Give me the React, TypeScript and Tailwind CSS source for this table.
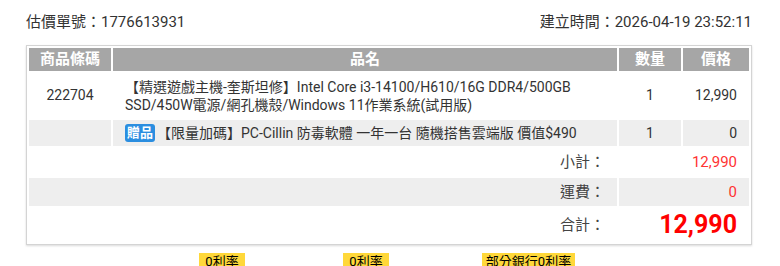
import React from "react";

// 估價單明細
const items = [
  {
    code: "222704",
    name: "【精選遊戲主機-奎斯坦修】Intel Core i3-14100/H610/16G DDR4/500GB SSD/450W電源/網孔機殼/Windows 11作業系統(試用版)",
    qty: 1,
    price: "12,990",
    gift: false,
  },
  {
    code: "",
    name: "【限量加碼】PC-Cillin 防毒軟體 一年一台 隨機搭售雲端版 價值$490",
    qty: 1,
    price: "0",
    gift: true,
  },
];

export default function App() {
  return (
    <div className="w-[780px] h-[266px] overflow-hidden bg-white text-[#333] font-['Roboto','Noto_Sans_CJK_TC',sans-serif]">
      <div className="ml-[26px] w-[726px]">
        {/* 單號 / 時間 */}
        <div className="flex justify-between items-start pt-[12px] h-[45px] text-[15px] leading-[20px] text-[#333]">
          <span>估價單號：1776613931</span>
          <span>建立時間：2026-04-19 23:52:11</span>
        </div>

        <div className="border border-[#d4d4d4] shadow-[0_1px_2px_rgba(0,0,0,0.15)]">
          <table className="w-full table-fixed border-separate border-spacing-[2px] text-[14px]">
            <colgroup>
              <col className="w-[82px]" />
              <col />
              <col className="w-[62px]" />
              <col className="w-[66px]" />
            </colgroup>
            <thead>
              <tr className="h-[23px] text-white font-bold text-[15px] leading-[23px]">
                <th className="bg-[#a6a6a6] p-0 text-center">商品條碼</th>
                <th className="bg-[#a6a6a6] p-0 text-center">品名</th>
                <th className="bg-[#a6a6a6] p-0 text-center">數量</th>
                <th className="bg-[#a6a6a6] p-0 text-center">價格</th>
              </tr>
            </thead>
            <tbody>
              {items.map((it, i) => (
                <tr key={i} className={it.gift ? "bg-[#eeeeee] h-[26px]" : "h-[45px]"}>
                  <td className="text-center p-0">{it.code}</td>
                  <td className="px-3 py-[4px] leading-[18px]">
                    {it.gift && (
                      <span className="inline-block mr-[2px] px-[2px] rounded-[3px] bg-[#2b8ee0] text-white text-[13px] font-bold leading-[18px] align-[1px]">
                        贈品
                      </span>
                    )}
                    {it.name}
                  </td>
                  <td className="text-center p-0">{it.qty}</td>
                  <td className="text-right pr-3 p-0">{it.price}</td>
                </tr>
              ))}
              <tr className="h-[28px]">
                <td colSpan={2} className="text-right pr-3 text-[15px] text-[#444]">小計：</td>
                <td colSpan={2} className="text-right pr-3 text-[15px] text-[#ff3333]">12,990</td>
              </tr>
              <tr className="h-[28px] bg-[#eeeeee]">
                <td colSpan={2} className="text-right pr-3 text-[15px] text-[#444]">運費：</td>
                <td colSpan={2} className="text-right pr-3 text-[15px] text-[#ff3333]">0</td>
              </tr>
              <tr className="h-[34px]">
                <td colSpan={2} className="text-right pr-3 text-[15px] text-[#444]">合計：</td>
                <td colSpan={2} className="text-right pr-3 text-[25px] font-bold text-[#ff0000] leading-[30px]">12,990</td>
              </tr>
            </tbody>
          </table>
        </div>

        {/* 分期標籤 */}
        <div className="flex mt-[8px] text-[13px] leading-[18px] text-black">
          <span className="ml-[173px] w-[46px] text-center bg-[#ffd83a]">0利率</span>
          <span className="ml-[98px] w-[46px] text-center bg-[#ffd83a]">0利率</span>
          <span className="ml-[93px] w-[93px] text-center bg-[#ffd83a]">部分銀行0利率</span>
        </div>
      </div>
    </div>
  );
}
